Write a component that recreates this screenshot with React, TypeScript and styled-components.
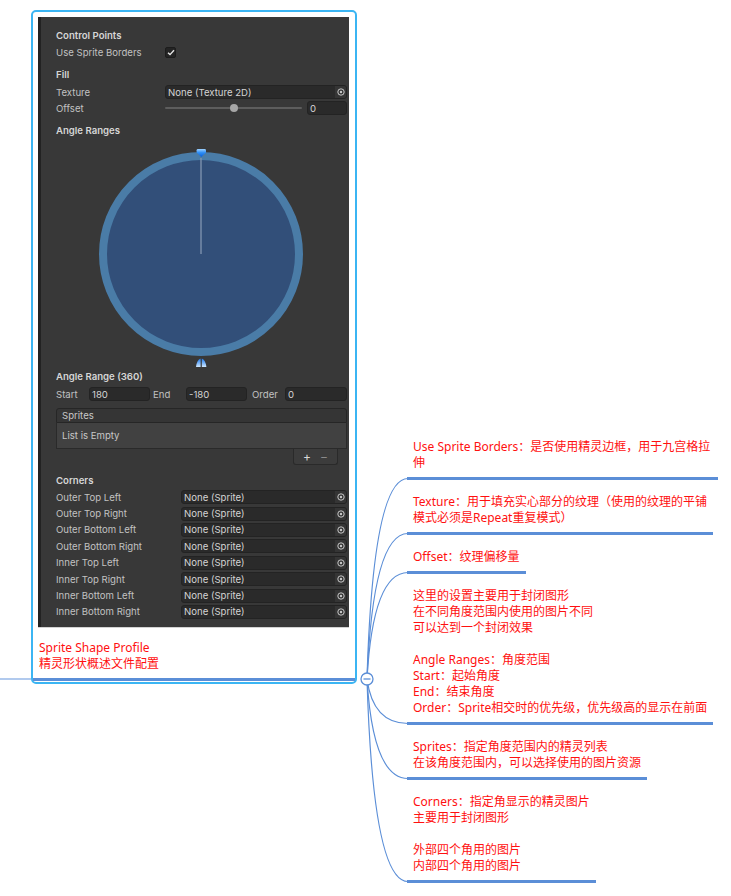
import React from "react";
import styled, { createGlobalStyle } from "styled-components";

const Global = createGlobalStyle`
  html, body { margin: 0; padding: 0; background: #ffffff; }
  #root { width: 731px; height: 896px; }
`;

const Canvas = styled.div`
  position: relative;
  width: 731px;
  height: 896px;
  overflow: hidden;
  display: flex;
  align-items: flex-start;
  background: #ffffff;
`;

const Connectors = styled.svg`
  position: absolute;
  left: 0;
  top: 0;
  pointer-events: none;
`;

/* ---------- left (selected) node ---------- */
const SelectionBox = styled.div`
  margin: 10px 0 0 31px;
  width: 326px;
  box-sizing: border-box;
  border: 2px solid #3bb5f3;
  border-radius: 5px;
  padding-bottom: 1px;
  background: #fff;
`;

const NodeContent = styled.div`
  padding: 5px 6px 0 5px;
`;

const Divider = styled.div`
  width: 311px;
  height: 1px;
  background: #d2d2d2;
`;

const Caption = styled.div`
  margin-top: 12px;
  padding-left: 1px;
  font-family: "Noto Sans", "Noto Sans CJK SC", sans-serif;
  font-size: 12px;
  line-height: 16px;
  color: #ff1010;
  white-space: nowrap;
`;

const NodeBar = styled.div`
  margin-top: 6px;
  height: 3px;
  background: #5b8ed7;
`;

/* ---------- Unity inspector panel ---------- */
const Panel = styled.div`
  width: 311px;
  height: 610px;
  box-sizing: border-box;
  background: #383838;
  border-left: 3px solid #222222;
  padding: 11px 2px 0 15px;
  font-family: Inter, "Noto Sans", sans-serif;
  font-size: 9.6px;
  color: #c2c2c2;
`;

const Header = styled.div<{ $top?: number }>`
  height: 16px;
  line-height: 16px;
  margin-top: ${(p) => p.$top ?? 0}px;
  font-weight: 600;
  color: #d6d6d6;
  white-space: nowrap;
`;

const PropRow = styled.div<{ $label: number; $top?: number; $h?: number }>`
  display: grid;
  grid-template-columns: ${(p) => p.$label}px 1fr;
  align-items: center;
  height: ${(p) => p.$h ?? 16}px;
  margin-top: ${(p) => p.$top ?? 0}px;
  white-space: nowrap;
`;

const Label = styled.span<{ $w?: number; $ml?: number }>`
  display: inline-block;
  ${(p) => (p.$w ? `width: ${p.$w}px; flex: none;` : "")}
  margin-left: ${(p) => p.$ml ?? 0}px;
  white-space: nowrap;
`;

const Checkbox = styled.div`
  width: 11px;
  height: 11px;
  box-sizing: border-box;
  border-radius: 2px;
  background: #242424;
  border: 1px solid #1c1c1c;
  display: flex;
  align-items: center;
  justify-content: center;
`;

const Field = styled.div<{ $w?: number }>`
  display: flex;
  align-items: center;
  height: 14px;
  box-sizing: border-box;
  ${(p) => (p.$w ? `width: ${p.$w}px; flex: none;` : "flex: 1; min-width: 0;")}
  background: #2a2a2a;
  border: 1px solid #232323;
  border-radius: 3px;
  padding-left: 2px;
  color: #d4d4d4;
  overflow: hidden;
`;

const FieldText = styled.span`
  flex: 1;
  white-space: nowrap;
`;

const Picker = styled.span`
  width: 11px;
  height: 12px;
  background: #353535;
  display: flex;
  align-items: center;
  justify-content: center;
`;

const SliderRow = styled.div`
  display: flex;
  align-items: center;
  gap: 5px;
`;

const SliderTrack = styled.div`
  position: relative;
  flex: 1;
  height: 2px;
  background: #5d5d5d;
  border-radius: 1px;
`;

const SliderThumb = styled.div`
  position: absolute;
  left: 50%;
  top: 50%;
  width: 8px;
  height: 8px;
  margin: -4px 0 0 -4px;
  border-radius: 50%;
  background: #a6a6a6;
`;

const AngleArea = styled.div`
  height: 230px;
`;

const InlineRow = styled.div<{ $top?: number }>`
  display: flex;
  align-items: center;
  height: 16px;
  margin-top: ${(p) => p.$top ?? 0}px;
`;

const List = styled.div`
  margin-top: 6px;
  display: flex;
  flex-direction: column;
`;

const ListHeader = styled.div`
  height: 15px;
  box-sizing: border-box;
  background: #353535;
  border: 1px solid #262626;
  border-radius: 3px 3px 0 0;
  padding-left: 5px;
  line-height: 13px;
  color: #c8c8c8;
`;

const ListBody = styled.div`
  height: 26px;
  box-sizing: border-box;
  background: #414141;
  border: 1px solid #2a2a2a;
  border-top: none;
  padding-left: 5px;
  line-height: 26px;
  color: #c8c8c8;
`;

const ListFooter = styled.div`
  align-self: flex-end;
  margin-right: 9px;
  width: 45px;
  height: 16px;
  box-sizing: border-box;
  background: #3c3c3c;
  border: 1px solid #2a2a2a;
  border-top: none;
  border-radius: 0 0 3px 3px;
  display: flex;
  align-items: center;
  justify-content: space-evenly;
  color: #cfcfcf;
  font-size: 12px;
`;

const FooterBtn = styled.span<{ $dim?: boolean }>`
  color: ${(p) => (p.$dim ? "#8a8a8a" : "#d8d8d8")};
  line-height: 14px;
`;

/* ---------- right topics ---------- */
const RightColumn = styled.div`
  margin-left: 50px;
  padding-top: 425px;
  display: flex;
  flex-direction: column;
  align-items: flex-start;
`;

const Topic = styled.div<{ $w: number }>`
  width: ${(p) => p.$w}px;
  padding-top: 14px;
`;

const TopicText = styled.div`
  padding-left: 6px;
  font-family: "Noto Sans", "Noto Sans CJK SC", sans-serif;
  font-size: 12px;
  line-height: 16px;
  color: #ff1010;
  white-space: nowrap;
`;

const TopicLine = styled.div`
  height: 16px;
`;

const TopicBar = styled.div`
  margin-top: 6px;
  height: 3px;
  background: #5b8ed7;
`;

const PickerIcon = () => (
  <svg width="8" height="8" viewBox="0 0 8 8">
    <circle cx="4" cy="4" r="3.2" fill="none" stroke="#c8c8c8" strokeWidth="1" />
    <circle cx="4" cy="4" r="1.2" fill="#c8c8c8" />
  </svg>
);

const ObjectField = ({ text }: { text: string }) => (
  <Field>
    <FieldText>{text}</FieldText>
    <Picker>
      <PickerIcon />
    </Picker>
  </Field>
);

const corners = [
  "Outer Top Left",
  "Outer Top Right",
  "Outer Bottom Left",
  "Outer Bottom Right",
  "Inner Top Left",
  "Inner Top Right",
  "Inner Bottom Left",
  "Inner Bottom Right",
];

const topics: { w: number; lines: string[] }[] = [
  { w: 311, lines: ["Use Sprite Borders：是否使用精灵边框，用于九宫格拉", "伸"] },
  { w: 306, lines: ["Texture：用于填充实心部分的纹理（使用的纹理的平铺", "模式必须是Repeat重复模式）"] },
  { w: 119, lines: ["Offset：纹理偏移量"] },
  {
    w: 306,
    lines: [
      "这里的设置主要用于封闭图形",
      "在不同角度范围内使用的图片不同",
      "可以达到一个封闭效果",
      "",
      "Angle Ranges：角度范围",
      "Start：起始角度",
      "End：结束角度",
      "Order：Sprite相交时的优先级，优先级高的显示在前面",
    ],
  },
  { w: 240, lines: ["Sprites：指定角度范围内的精灵列表", "在该角度范围内，可以选择使用的图片资源"] },
  { w: 189, lines: ["Corners：指定角显示的精灵图片", "主要用于封闭图形", "", "外部四个角用的图片", "内部四个角用的图片"] },
];

const barYs = [478.5, 533.5, 572.5, 723.5, 778.5, 881.5];

const AngleDial = () => (
  <svg width="291" height="230" viewBox="0 0 291 230">
    <defs>
      <linearGradient id="pin" x1="0" y1="0" x2="0" y2="1">
        <stop offset="0" stopColor="#9fd2ff" />
        <stop offset="0.45" stopColor="#2f8ff5" />
        <stop offset="1" stopColor="#0a5fd8" />
      </linearGradient>
      <linearGradient id="pin2" x1="0" y1="0" x2="0" y2="1">
        <stop offset="0" stopColor="#1a78ee" />
        <stop offset="1" stopColor="#cfe8ff" />
      </linearGradient>
    </defs>
    <circle cx="145" cy="115" r="98" fill="#324f79" stroke="#4a7ca7" strokeWidth="8" />
    <line x1="145" y1="115" x2="145" y2="19" stroke="#8396b1" strokeWidth="1.3" />
    <path d="M140.6 11.2 Q140.6 10 142 10 H148.6 Q150 10 150 11.2 V13.4 L145.3 18 L140.6 13.4 Z" fill="url(#pin)" />
    <path d="M144.6 219.5 Q141 220.5 140 228 H144.6 Z" fill="url(#pin2)" />
    <path d="M145.8 219.5 Q149.4 220.5 150.4 228 H145.8 Z" fill="url(#pin2)" />
  </svg>
);

export default function App() {
  return (
    <>
      <Global />
      <Canvas>
        <SelectionBox>
          <NodeContent>
            <Panel>
              <Header>Control Points</Header>
              <PropRow $label={109}>
                <Label>Use Sprite Borders</Label>
                <Checkbox>
                  <svg width="8" height="7" viewBox="0 0 8 7">
                    <path d="M1 3.8 L3 5.6 L7 1.2" fill="none" stroke="#e6e6e6" strokeWidth="1.4" />
                  </svg>
                </Checkbox>
              </PropRow>
              <Header $top={7}>Fill</Header>
              <PropRow $label={109} $top={1}>
                <Label>Texture</Label>
                <ObjectField text="None (Texture 2D)" />
              </PropRow>
              <PropRow $label={109}>
                <Label>Offset</Label>
                <SliderRow>
                  <SliderTrack>
                    <SliderThumb />
                  </SliderTrack>
                  <Field $w={40}>0</Field>
                </SliderRow>
              </PropRow>
              <Header $top={7}>Angle Ranges</Header>
              <AngleArea>
                <AngleDial />
              </AngleArea>
              <Header>Angle Range (360)</Header>
              <InlineRow $top={1}>
                <Label $w={33}>Start</Label>
                <Field $w={61}>180</Field>
                <Label $w={33} $ml={3}>End</Label>
                <Field $w={61}>-180</Field>
                <Label $w={33} $ml={5}>Order</Label>
                <Field>0</Field>
              </InlineRow>
              <List>
                <ListHeader>Sprites</ListHeader>
                <ListBody>List is Empty</ListBody>
                <ListFooter>
                  <FooterBtn>+</FooterBtn>
                  <FooterBtn $dim>−</FooterBtn>
                </ListFooter>
              </List>
              <Header $top={8}>Corners</Header>
              {corners.map((c) => (
                <PropRow key={c} $label={125} $h={16.4}>
                  <Label>{c}</Label>
                  <ObjectField text="None (Sprite)" />
                </PropRow>
              ))}
            </Panel>
            <Divider />
            <Caption>
              <div>Sprite Shape Profile</div>
              <div>精灵形状概述文件配置</div>
            </Caption>
          </NodeContent>
          <NodeBar />
        </SelectionBox>

        <RightColumn>
          {topics.map((t, i) => (
            <Topic key={i} $w={t.w}>
              <TopicText>
                {t.lines.map((l, j) => (
                  <TopicLine key={j}>{l}</TopicLine>
                ))}
              </TopicText>
              <TopicBar />
            </Topic>
          ))}
        </RightColumn>

        <Connectors width="731" height="896" viewBox="0 0 731 896">
          <path d="M0 679 H31" stroke="#7da7e3" strokeWidth="1.2" fill="none" />
          {barYs.map((y) => (
            <path
              key={y}
              d={`M367 679 Q373 ${y} 408 ${y}`}
              stroke="#5b8ed7"
              strokeWidth="1.2"
              fill="none"
            />
          ))}
          <circle cx="367" cy="679" r="6" fill="#ffffff" stroke="#5b8ed7" strokeWidth="1.3" />
          <path d="M363.5 679 H370.5" stroke="#5b8ed7" strokeWidth="1.3" />
        </Connectors>
      </Canvas>
    </>
  );
}
